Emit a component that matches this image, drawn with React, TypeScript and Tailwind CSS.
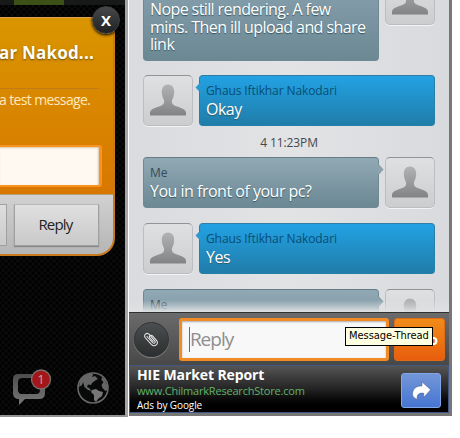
import type { ReactNode } from 'react';

function Avatar({ className = '' }: { className?: string }) {
  return (
    <div className={`h-[51px] w-[50px] shrink-0 overflow-hidden rounded-[5px] border border-[#bcbdc0] border-t-[#929395] bg-gradient-to-b from-[#dfe0e1] to-[#cccdcf] shadow-[0_1px_0_#f2f3f4] ${className}`}>
      <svg viewBox="0 0 48 49" className="h-[49px] w-[48px]">
        <defs>
          <linearGradient id="person" x1="0" y1="0" x2="0" y2="1">
            <stop offset="0" stopColor="#b2b3b4" />
            <stop offset="1" stopColor="#828384" />
          </linearGradient>
        </defs>
        <path
          d="M24 8.500c3.800 0 6.300 3 6.200 7.500-.1 3.500-1.200 6.300-2.200 8-.6 3.200.5 4.800 3.500 5.900 6.500 2.200 10.500 3.600 10.500 7v2.700H6v-2.700c0-3.400 4-4.800 10.500-7 3-1.100 4.100-2.700 3.500-5.900-1-1.700-2.100-4.500-2.200-8C17.700 11.500 20.200 8.500 24 8.500Z"
          fill="url(#person)"
        />
      </svg>
    </div>
  );
}

function Bubble({ mine = false, arrow = true, className = '', children }: { mine?: boolean; arrow?: boolean; className?: string; children: ReactNode }) {
  return (
    <div
      className={`relative w-[236px] shrink-0 rounded-[4px] border px-[6px] ${
        mine
          ? 'border-[#6f8893] border-t-[#657b86] bg-gradient-to-b from-[#91a9b5] to-[#6b8893]'
          : 'border-[#267fa9] border-t-[#347ca0] bg-gradient-to-b from-[#22a2e4] to-[#207da9]'
      } ${className}`}
    >
      {children}
      {arrow && (
        <svg viewBox="0 0 6 13" className={`absolute top-[5px] h-[13px] w-[6px] ${mine ? '-right-[6px]' : '-left-[5px] -scale-x-100'}`}>
          <path d="M0 1 5 6.500 0 12Z" fill={mine ? '#8ca4b0' : '#249bd7'} />
          <path d="M0 1 5 6.500 0 12" fill="none" stroke={mine ? '#718a95' : '#308fbd'} strokeWidth=".7" />
        </svg>
      )}
    </div>
  );
}

function Sender({ children, className = '' }: { children: ReactNode; className?: string }) {
  return <div className={`whitespace-nowrap pt-[6px] text-[12px] leading-[17px] tracking-[-0.1px] ${className}`}>{children}</div>;
}

function Body({ children, className = '' }: { children: ReactNode; className?: string }) {
  return <div className={`whitespace-nowrap text-[16px] leading-[20px] tracking-[-0.5px] text-white [text-shadow:0_1px_1px_#345663] ${className}`}>{children}</div>;
}

const mesh =
  'bg-[#040405] bg-[radial-gradient(circle,#000_1px,transparent_2px),radial-gradient(circle,#000_1px,#0b0b0c_2.5px)] bg-[size:6px_6px] bg-[position:0_0,3px_3px]';

function NotificationPanel() {
  return (
    <section className={`relative flex h-[417px] w-[128px] shrink-0 flex-col overflow-hidden border-r-[3px] border-b-2 border-r-[#a5a5a5] border-b-[#929292] ${mesh}`}>
      <div className="flex h-[5px] shrink-0 bg-[#171818] pl-[14px] pr-[11px]">
        <div className="w-[50px] bg-[#3b5117]" />
      </div>
      <div className="mt-[12px] flex h-[239px] w-[115px] shrink-0 flex-col overflow-hidden rounded-br-[18px] border-r-2 border-b-2 border-t border-[#c87a1e] border-t-[#e1a453] bg-gradient-to-b from-[#d99500] to-[#d76c00]">
        <div className="mr-[14px] flex h-[71px] shrink-0 items-start justify-end border-b border-[#c17c18] pt-[22px]">
          <span className="mr-[5px] whitespace-nowrap text-[17px] leading-[25px] font-bold tracking-[0.2px] text-[#fffdf3] [text-shadow:0_1px_2px_#684e12]">ar Nakod...</span>
        </div>
        <div className="flex h-[56px] shrink-0 pt-[1px]">
          <span className="-ml-px whitespace-nowrap text-[14px] leading-[20px] tracking-[-0.62px] text-[#ffe9bd]">a test message.</span>
        </div>
        <div className="h-[42px] w-[102px] shrink-0 rounded-r-[3px] border-y-2 border-r-[3px] border-[#fa941f] bg-[#fff9f2] shadow-[inset_-1px_1px_2px_#d8c5ac]" />
        <div className="mt-[7px] flex h-[61px] shrink-0 gap-[7px] border-t border-[#b5a077] bg-gradient-to-b from-[#d1d1d1] to-[#b5b5b5] pt-[9px]">
          <div className="h-[42px] w-[7px] border border-l-0 border-[#a0a0a0] bg-gradient-to-b from-[#dedede] to-[#cacaca]" />
          <div className="flex h-[42px] w-[85px] items-center justify-center border border-[#a0a0a0] border-t-[#b8b8b8] bg-gradient-to-b from-[#e0e0e0] to-[#c9c9c9] pr-[2px] pb-[1px] text-[15px] tracking-[-0.8px] text-[#222] shadow-[0_1px_1px_#888]">Reply</div>
        </div>
      </div>
      <div className="absolute left-[92px] top-[6px] flex h-[28px] w-[28px] items-center justify-center rounded-full border border-[#3b3d3e] bg-gradient-to-b from-[#464849] to-[#202123] shadow-[0_1px_3px_#000]">
        <span className="pb-px text-[15px] leading-[18px] font-bold text-white">X</span>
      </div>
      <div className="mt-auto mb-[9px] flex items-end pl-[12px]">
        <svg viewBox="0 0 42 38" className="h-[38px] w-[42px]">
          <defs>
            <linearGradient id="icon" x1="0" y1="0" x2="0" y2="1">
              <stop stopColor="#4c4c4c" />
              <stop offset="1" stopColor="#777" />
            </linearGradient>
          </defs>
          <path fillRule="evenodd" fill="url(#icon)" d="M6 6H28Q33 6 33 11V25Q33 31 27 31H13L7 37V31Q1 31 1 25V11Q1 6 6 6ZM10 10Q6 10 6 14V22Q6 26 10 26H24Q28 26 28 22V14Q28 10 24 10Z" />
          <circle cx="29" cy="11.500" r="9.500" fill="#a3171a" stroke="#77706d" strokeWidth="1.300" />
          <text x="29" y="16" textAnchor="middle" fontSize="13" fill="#c7a59e">1</text>
        </svg>
        <svg viewBox="0 0 34 34" className="mb-px ml-[22px] h-[34px] w-[34px]">
          <circle cx="17" cy="17" r="15" fill="#080909" stroke="#696969" strokeWidth="1.600" />
          <path fill="#666" d="M16 2 8 4.500 4 10 3 16 6 14 7 11 8.500 16 12 19 16 20 13 17 11 16 12 13.500 15 14 16 12 20 9 22 8 19 5 16 6 17 4Z" />
          <path fill="#777" d="m16 19 4-1 3 2 4 1-1 4-4 3-2 3-2-2 0-5-3-3Z" />
          <path fill="#666" d="m26 6 3 3 2 5 .500 5-2 1-3-3-1-3 2-3-2-2Z" />
        </svg>
      </div>
    </section>
  );
}

function ThreadPanel() {
  return (
    <section className="ml-px flex h-[416px] w-[323px] shrink-0 flex-col border-r-[3px] border-b-[3px] border-r-[#777] border-b-[#777]">
      <div className="relative flex h-[312px] shrink-0 flex-col overflow-hidden bg-gradient-to-r from-[#dadbde] via-[#e2e3e5] to-[#d9dadd] px-[14px]">
        <div className="flex h-[61px] shrink-0 gap-[6px]">
          <Bubble mine arrow={false} className="h-[61px] rounded-t-none border-t-0 !from-[#819ba8]">
            <Body className="pt-px !leading-[17.500px]">
              <div className="tracking-[-0.6px]">Nope still rendering. A few</div>
              <div className="tracking-[-0.57px]">mins. Then ill upload and share</div>
              <div>link</div>
            </Body>
          </Bubble>
          <Avatar className="-mt-[26px]" />
        </div>
        <div className="mt-[14px] flex shrink-0 gap-[6px]">
          <Avatar />
          <Bubble><Sender className="text-[#074e75]">Ghaus Iftikhar Nakodari</Sender><Body>Okay</Body></Bubble>
        </div>
        <div className="flex h-[31px] shrink-0 items-center justify-center pt-[2px] text-[12px] tracking-[-0.1px] text-[#46484a]">4 11:23PM</div>
        <div className="flex shrink-0 gap-[6px]">
          <Bubble mine><Sender className="text-[#374b57]">Me</Sender><Body>You in front of your pc?</Body></Bubble>
          <Avatar />
        </div>
        <div className="mt-[15px] flex shrink-0 gap-[6px]">
          <Avatar />
          <Bubble><Sender className="text-[#074e75]">Ghaus Iftikhar Nakodari</Sender><Body>Yes</Body></Bubble>
        </div>
        <div className="mt-[15px] flex shrink-0 gap-[6px]">
          <Bubble mine className="h-[51px]"><Sender className="text-[#374b57]">Me</Sender></Bubble>
          <Avatar />
        </div>
        <div className="absolute inset-x-0 bottom-0 h-[12px] bg-gradient-to-b from-transparent to-[#dfe1e3]" />
      </div>
      <div className="relative flex h-[53px] shrink-0 items-center border-t border-[#303030] bg-gradient-to-b from-[#6b6b6b] to-[#484848] pl-[5px] pr-[4px]">
        <div className="flex h-[35px] w-[35px] items-center justify-center rounded-full border border-[#303234] bg-gradient-to-b from-[#4c4f51] to-[#2c2e2f] shadow-[0_1px_1px_#858585]">
          <svg viewBox="0 0 16 16" className="h-[16px] w-[16px]" fill="none" stroke="#e2e2e2" strokeWidth="1.100" strokeLinecap="round">
            <path d="m4 5.500 5.500 6c1.600 1.700 3.600-.1 2.200-1.700L6.500 3.700C3.700.6-.2 4 2.500 7l5.800 6.300c3.500 3.500 8-.5 5-4.100L9.500 5C7.700 3.200 5.500 5.200 7 7l3.200 3.500" />
          </svg>
        </div>
        <div className="ml-[10px] flex h-[43px] w-[211px] items-center rounded-[3px] border-[3px] border-[#f08b25] bg-[#f8f8f8] pl-[7px] shadow-[inset_0_1px_2px_#aaa]">
          <div className="h-[25px] w-[1px] bg-[#686868]" />
          <span className="text-[19px] leading-[26px] tracking-[-1px] text-[#8e8e8e]">Reply</span>
        </div>
        <div className="ml-[5px] flex h-[43px] w-[51px] items-center justify-end rounded-[3px] border border-[#df6b17] bg-gradient-to-b from-[#f08b18] to-[#e85d0d] pr-[6px] text-[15px] font-bold text-white">o</div>
        <div className="absolute left-[216px] top-[14px] flex h-[19px] w-[88px] items-center whitespace-nowrap border border-black bg-[#ffffe1] pl-[3px] font-['DejaVu_Sans_Condensed','DejaVu_Sans',sans-serif] text-[11px] tracking-[-0.05px] text-black">Message-Thread</div>
      </div>
      <div className="flex h-[48px] shrink-0 justify-between border border-[#405684] bg-gradient-to-b from-[#555] via-[#242424] to-black pr-[7px] pl-[7px]">
        <div className="flex flex-col whitespace-nowrap text-white">
          <span className="text-[14px] leading-[17px] font-bold tracking-[-0.1px]">HIE Market Report</span>
          <span className="text-[11px] leading-[16px] tracking-[-0.2px] text-[#60b269]">www.ChilmarkResearchStore.com</span>
          <span className="text-[10px] leading-[13px] tracking-[-0.1px]">Ads by Google</span>
        </div>
        <div className="mt-[7px] flex h-[35px] w-[40px] items-center justify-center rounded-[3px] border border-[#82a7e9] bg-gradient-to-b from-[#7396d8] to-[#4675d1]">
          <svg viewBox="0 0 24 24" className="h-[22px] w-[22px]">
            <path fill="#fff" stroke="#405987" strokeWidth=".6" d="M13 2 22.500 10.500 15 19V14.500C10 13.500 7 16 8 21 4 20 2 17 3 13 4.500 8 8 6.500 13 6.500Z" />
          </svg>
        </div>
      </div>
    </section>
  );
}

export default function App() {
  return (
    <main className="flex h-[438px] w-[460px] items-start overflow-hidden bg-white font-['Open_Sans','Noto_Sans',sans-serif]">
      <NotificationPanel />
      <ThreadPanel />
    </main>
  );
}
